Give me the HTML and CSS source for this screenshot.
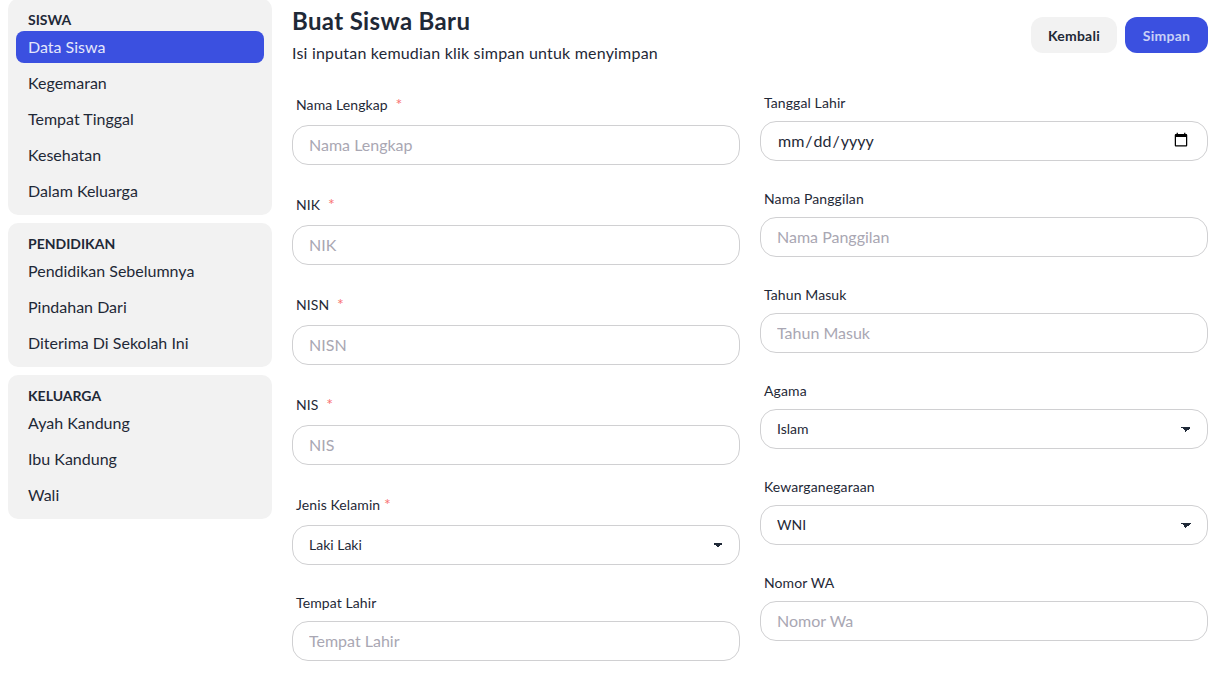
FILE: index.html
```html
<!DOCTYPE html>
<html lang="id">
<head>
  <meta charset="UTF-8">
  <meta name="viewport" content="width=device-width, initial-scale=1.0">
  <title>Buat Siswa Baru</title>
  <link rel="stylesheet" href="styles.css">
</head>
<body>
  <div class="layout">
    <aside class="sidebar">
      <ul class="menu">
        <li class="menu-title">SISWA</li>
        <li><a class="active" href="#">Data Siswa</a></li>
        <li><a href="#">Kegemaran</a></li>
        <li><a href="#">Tempat Tinggal</a></li>
        <li><a href="#">Kesehatan</a></li>
        <li><a href="#">Dalam Keluarga</a></li>
      </ul>
      <ul class="menu">
        <li class="menu-title">PENDIDIKAN</li>
        <li><a href="#">Pendidikan Sebelumnya</a></li>
        <li><a href="#">Pindahan Dari</a></li>
        <li><a href="#">Diterima Di Sekolah Ini</a></li>
      </ul>
      <ul class="menu">
        <li class="menu-title">KELUARGA</li>
        <li><a href="#">Ayah Kandung</a></li>
        <li><a href="#">Ibu Kandung</a></li>
        <li><a href="#">Wali</a></li>
      </ul>
    </aside>

    <main class="content">
      <div class="page-head">
        <div>
          <h1>Buat Siswa Baru</h1>
          <p>Isi inputan kemudian klik simpan untuk menyimpan</p>
        </div>
        <div class="actions">
          <button class="btn">Kembali</button>
          <button class="btn btn-primary">Simpan</button>
        </div>
      </div>

      <form class="form-grid">
        <div class="col">
          <div class="field">
            <label class="label label-req">Nama Lengkap <span class="req req-far">*</span></label>
            <input class="input" type="text" placeholder="Nama Lengkap">
          </div>
          <div class="field">
            <label class="label label-req">NIK <span class="req req-far">*</span></label>
            <input class="input" type="text" placeholder="NIK">
          </div>
          <div class="field">
            <label class="label label-req">NISN <span class="req req-far">*</span></label>
            <input class="input" type="text" placeholder="NISN">
          </div>
          <div class="field">
            <label class="label label-req">NIS <span class="req req-far">*</span></label>
            <input class="input" type="text" placeholder="NIS">
          </div>
          <div class="field">
            <label class="label label-req">Jenis Kelamin <span class="req">*</span></label>
            <select class="input select">
              <option>Laki Laki</option>
              <option>Perempuan</option>
            </select>
          </div>
          <div class="field">
            <label class="label">Tempat Lahir</label>
            <input class="input" type="text" placeholder="Tempat Lahir">
          </div>
        </div>

        <div class="col">
          <div class="field">
            <label class="label">Tanggal Lahir</label>
            <input class="input" type="date">
          </div>
          <div class="field">
            <label class="label">Nama Panggilan</label>
            <input class="input" type="text" placeholder="Nama Panggilan">
          </div>
          <div class="field">
            <label class="label">Tahun Masuk</label>
            <input class="input" type="text" placeholder="Tahun Masuk">
          </div>
          <div class="field">
            <label class="label">Agama</label>
            <select class="input select">
              <option>Islam</option>
              <option>Kristen</option>
            </select>
          </div>
          <div class="field">
            <label class="label">Kewarganegaraan</label>
            <select class="input select">
              <option>WNI</option>
              <option>WNA</option>
            </select>
          </div>
          <div class="field">
            <label class="label">Nomor WA</label>
            <input class="input" type="text" placeholder="Nomor Wa">
          </div>
        </div>
      </form>
    </main>
  </div>
</body>
</html>
```

FILE: styles.css
```css
* {
  box-sizing: border-box;
}
body {
  margin: 0;
  background-color: #ffffff;
  color: #1f2937;
  font-family: 'Lato', 'Liberation Sans', sans-serif;
  font-size: 14px;
}
.layout {
  display: flex;
  gap: 20px;
  padding: 0 11px 12px 8px;
}
.sidebar {
  width: 264px;
  flex-shrink: 0;
  display: flex;
  flex-direction: column;
  gap: 8px;
  margin-top: -1px;
}
.menu {
  list-style: none;
  margin: 0;
  padding: 11px 8px 8px;
  background-color: #f2f2f2;
  border-radius: 10px;
  display: flex;
  flex-direction: column;
  gap: 4px;
}
.menu-title {
  padding: 0 12px;
  height: 17px;
  font-size: 14px;
  font-weight: 700;
  line-height: 20px;
  color: #1f2937;
}
.menu a {
  display: block;
  height: 32px;
  padding: 0 12px;
  border-radius: 8px;
  line-height: 32px;
  font-size: 16px;
  color: #1f2937;
  text-decoration: none;
}
.menu a.active {
  background-color: #3b50e0;
  color: #e4e7fb;
}
.content {
  flex: 1;
  min-width: 0;
}
.page-head {
  display: flex;
  justify-content: space-between;
  align-items: center;
  height: 85px;
  padding-bottom: 15px;
}
h1 {
  margin: 0;
  font-size: 24px;
  font-weight: 700;
  line-height: 32px;
  letter-spacing: 0.35px;
  color: #1f2937;
}
.page-head p {
  margin: 4px 0 0;
  font-size: 16px;
  line-height: 24px;
  letter-spacing: 0.2px;
  color: #1f2937;
}
.actions {
  display: flex;
  gap: 8px;
}
.btn {
  height: 36px;
  padding: 0 17px;
  border: none;
  border-radius: 12px;
  background-color: #f2f2f2;
  color: #1f2937;
  font-family: inherit;
  font-size: 14px;
  font-weight: 700;
  letter-spacing: 0.25px;
}
.btn-primary {
  min-width: 83px;
  background-color: #3b50e0;
  color: #c9d0f7;
}
.form-grid {
  display: grid;
  grid-template-columns: 1fr 1fr;
  gap: 20px;
}
.col {
  display: flex;
  flex-direction: column;
  gap: 20px;
}
.label {
  display: block;
  padding: 8px 4px;
  font-size: 14px;
  line-height: 20px;
  letter-spacing: 0.1px;
  color: #1f2937;
}
.label-req {
  padding: 10px 4px;
}
.req {
  font-size: 16px;
  line-height: 1;
  color: #f87272;
}
.req-far {
  margin-left: 4px;
}
.input {
  display: block;
  width: 100%;
  height: 40px;
  padding: 0 16px 2px;
  border: 1px solid #d0d0d2;
  border-radius: 16px;
  background-color: #ffffff;
  color: #1f2937;
  font-family: inherit;
  font-size: 16px;
}
.input::placeholder {
  color: #a9a7b3;
}
.select {
  appearance: none;
  font-size: 14px;
  background-image: linear-gradient(45deg, transparent 50%, #1f2937 50%), linear-gradient(135deg, #1f2937 50%, transparent 50%);
  background-position: right 21px center, right 16px center;
  background-size: 5px 5px;
  background-repeat: no-repeat;
}
```
